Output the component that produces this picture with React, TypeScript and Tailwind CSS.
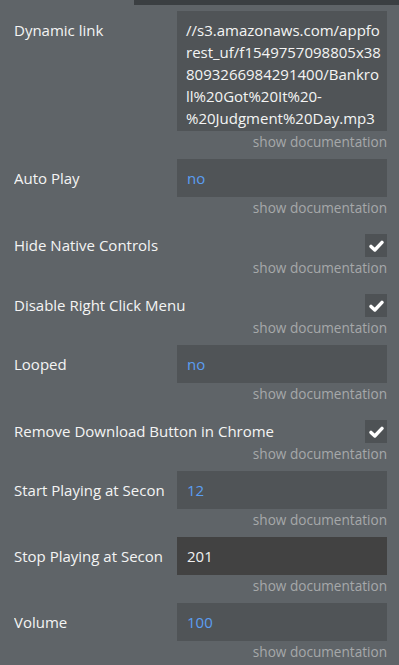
import type { ReactNode } from "react";

const linkLines = [
  "//s3.amazonaws.com/appfo",
  "rest_uf/f1549757098805x38",
  "8093266984291400/Bankro",
  "ll%20Got%20It%20-",
  "%20Judgment%20Day.mp3",
];

function Doc() {
  return (
    <div className="h-[22px] flex items-center justify-end text-[13.6px] text-[#a6a8aa]">
      show documentation
    </div>
  );
}

function InputRow({ label, value, dark }: { label: string; value: string; dark?: boolean }) {
  return (
    <div className="mt-[6px]">
      <div className="flex items-center h-[38px]">
        <div className="flex-1 overflow-hidden whitespace-nowrap text-[15px] text-[#f4f4f4]">{label}</div>
        <div
          className={
            dark
              ? "w-[210px] h-full flex items-center px-[10px] bg-[#424242] text-[15px] text-[#f0f0f0]"
              : "w-[210px] h-full flex items-center px-[10px] bg-[#505457] text-[15px] text-[#5b9ef2]"
          }
        >
          {value}
        </div>
      </div>
      <Doc />
    </div>
  );
}

function CheckRow({ label }: { label: string }) {
  return (
    <div className="mt-[6px]">
      <div className="h-[32px] flex items-end">
        <div className="flex w-full items-center justify-between h-[23px]">
          <span className="text-[15px] text-[#f4f4f4] whitespace-nowrap">{label}</span>
          <span className="w-[22px] h-[23px] flex items-center justify-center bg-[#4e5255]">
            <svg width="15" height="12" viewBox="0 0 15 12" fill="none">
              <path d="M2 6.4 L5.8 10 L13 2.4" stroke="#ffffff" strokeWidth="3.4" strokeLinecap="round" strokeLinejoin="round" />
            </svg>
          </span>
        </div>
      </div>
      <Doc />
    </div>
  );
}

function Panel({ children }: { children: ReactNode }) {
  return <div className="pl-[14px] pr-[12px] pt-[6px]">{children}</div>;
}

export default function App() {
  return (
    <div
      className="w-[399px] h-[665px] overflow-hidden bg-[#5f6468]"
      style={{ fontFamily: '"Open Sans", "Noto Sans", sans-serif' }}
    >
      <div className="flex h-[5px]">
        <div className="w-[134px]" />
        <div className="flex-1 bg-[#3b3f42]" />
      </div>
      <Panel>
        <div className="flex items-start">
          <div className="flex-1 pt-[8px] leading-[22px] text-[15px] text-[#f4f4f4]">Dynamic link</div>
          <div className="w-[210px] h-[120px] pt-[8px] pl-[9px] bg-[#505457] text-[15px] leading-[22px] text-[#f4f4f4] whitespace-nowrap overflow-hidden">
            {linkLines.map((l) => (
              <div key={l}>{l}</div>
            ))}
          </div>
        </div>
        <Doc />
        <InputRow label="Auto Play" value="no" />
        <CheckRow label="Hide Native Controls" />
        <CheckRow label="Disable Right Click Menu" />
        <InputRow label="Looped" value="no" />
        <CheckRow label="Remove Download Button in Chrome" />
        <InputRow label="Start Playing at Secon" value="12" />
        <InputRow label="Stop Playing at Secon" value="201" dark />
        <InputRow label="Volume" value="100" />
      </Panel>
    </div>
  );
}
